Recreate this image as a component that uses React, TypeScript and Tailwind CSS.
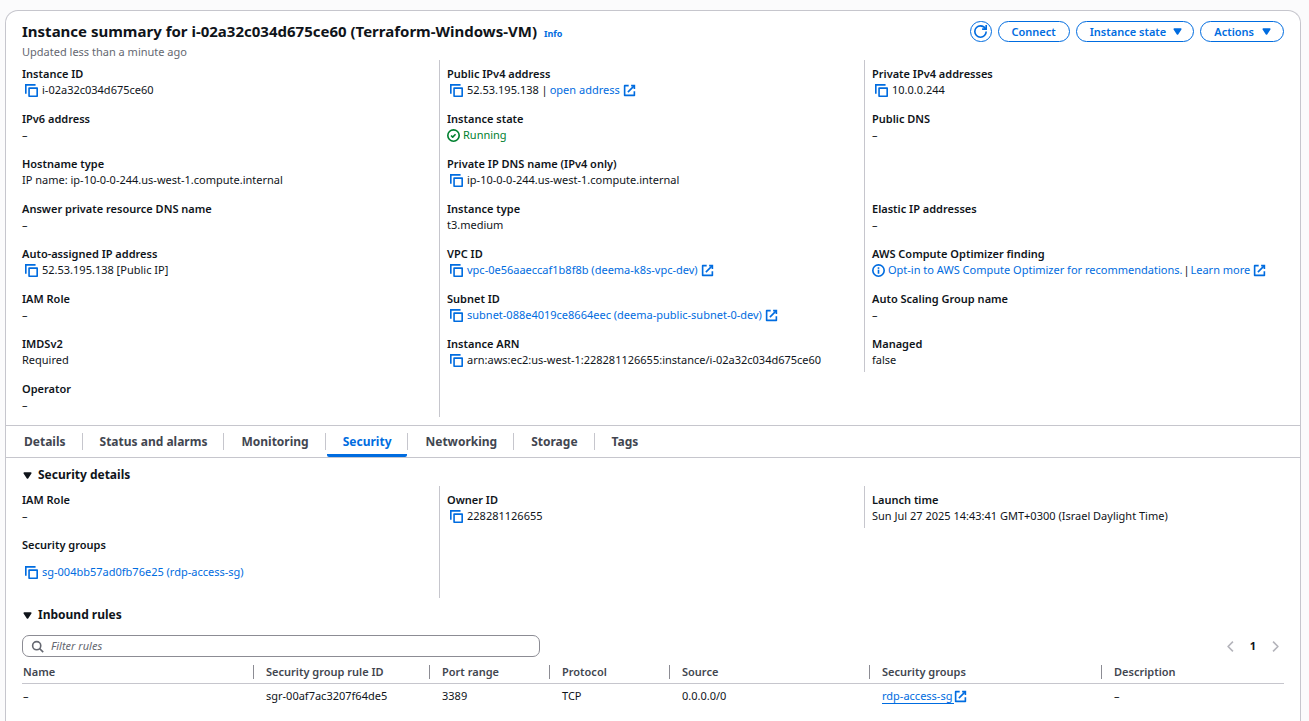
import React from "react";

type IconProps = { className?: string };

function Icon({ className = "", children }: IconProps & { children: React.ReactNode }) {
  return (
    <svg
      viewBox="0 0 16 16"
      fill="none"
      stroke="currentColor"
      strokeWidth="2"
      strokeLinejoin="round"
      aria-hidden="true"
      className={`size-[13px] shrink-0 ${className}`}
    >
      {children}
    </svg>
  );
}

const CopyIcon = () => (
  <Icon>
    <path d="M15 5H5v10h10V5Z" />
    <path d="M13 1H1v11" strokeLinejoin="miter" />
  </Icon>
);

const ExternalIcon = () => (
  <Icon>
    <path d="M10 2h4v4" strokeLinejoin="miter" />
    <path d="m6 10 8-8" />
    <path d="M14 9.048V14H2V2h5" />
  </Icon>
);

const RunningIcon = () => (
  <Icon>
    <circle cx="8" cy="8" r="7" />
    <path d="m5 8 2 2 3.521-3.521" />
  </Icon>
);

const InfoIcon = () => (
  <Icon>
    <circle cx="8" cy="8" r="7" />
    <path d="M8 12V7" />
    <path d="M8 4v2" />
  </Icon>
);

const CaretIcon = ({ className = "" }: IconProps) => (
  <Icon className={className}>
    <path d="M4 5h8l-4 6-4-6z" fill="currentColor" />
  </Icon>
);

const link = "text-[#006ce0]";

function Copyable({ children, name }: { children: React.ReactNode; name: string }) {
  return (
    <span className="flex items-center gap-1 pl-[3px]">
      <button type="button" aria-label={`Copy ${name}`} className={link}>
        <CopyIcon />
      </button>
      <span className="flex items-center gap-0.5">{children}</span>
    </span>
  );
}

function External({ children }: { children: React.ReactNode }) {
  return (
    <a href="#" className={`flex items-center gap-[3px] ${link}`}>
      {children}
      <ExternalIcon />
    </a>
  );
}

type Field = { label: string; value?: React.ReactNode; blank?: boolean };

function Item({ label, value }: Field) {
  return (
    <div className="pb-[13px] last:pb-1">
      <dt className="font-semibold">{label}</dt>
      <dd>{value ?? "–"}</dd>
    </div>
  );
}

function Columns({ columns }: { columns: Field[][] }) {
  return (
    <div className="grid grid-cols-3 pl-2 pr-[11px]">
      {columns.map((fields, i) => (
        <dl
          key={i}
          className={`border-l pl-[7px] pt-[6px] ${i === 0 ? "border-transparent" : "border-[#c6c6cd]"} ${
            i === 2 ? "self-start" : ""
          }`}
        >
          {fields.map((f, j) => (f.blank ? <div key={j} className="h-[45px]" /> : <Item key={j} {...f} />))}
        </dl>
      ))}
    </div>
  );
}

const summary: Field[][] = [
  [
    { label: "Instance ID", value: <Copyable name="instance ID">i-02a32c034d675ce60</Copyable> },
    { label: "IPv6 address" },
    { label: "Hostname type", value: "IP name: ip-10-0-0-244.us-west-1.compute.internal" },
    { label: "Answer private resource DNS name" },
    {
      label: "Auto-assigned IP address",
      value: <Copyable name="auto-assigned IP address">52.53.195.138 [Public IP]</Copyable>,
    },
    { label: "IAM Role" },
    { label: "IMDSv2", value: "Required" },
    { label: "Operator" },
  ],
  [
    {
      label: "Public IPv4 address",
      value: (
        <Copyable name="public IPv4 address">
          <span>52.53.195.138 |</span>
          <External>open address</External>
        </Copyable>
      ),
    },
    {
      label: "Instance state",
      value: (
        <span className="flex items-center gap-[3px] text-[#00802f]">
          <RunningIcon />
          Running
        </span>
      ),
    },
    {
      label: "Private IP DNS name (IPv4 only)",
      value: <Copyable name="private IP DNS name">ip-10-0-0-244.us-west-1.compute.internal</Copyable>,
    },
    { label: "Instance type", value: "t3.medium" },
    {
      label: "VPC ID",
      value: (
        <Copyable name="VPC ID">
          <External>vpc-0e56aaeccaf1b8f8b (deema-k8s-vpc-dev)</External>
        </Copyable>
      ),
    },
    {
      label: "Subnet ID",
      value: (
        <Copyable name="subnet ID">
          <External>subnet-088e4019ce8664eec (deema-public-subnet-0-dev)</External>
        </Copyable>
      ),
    },
    {
      label: "Instance ARN",
      value: (
        <Copyable name="instance ARN">arn:aws:ec2:us-west-1:228281126655:instance/i-02a32c034d675ce60</Copyable>
      ),
    },
  ],
  [
    { label: "Private IPv4 addresses", value: <Copyable name="private IPv4 address">10.0.0.244</Copyable> },
    { label: "Public DNS" },
    { label: "", blank: true },
    { label: "Elastic IP addresses" },
    {
      label: "AWS Compute Optimizer finding",
      value: (
        <span className="flex items-center gap-[3px]">
          <span className={link}>
            <InfoIcon />
          </span>
          <span className="flex items-center">
            <a href="#" className={link}>
              Opt-in to AWS Compute Optimizer for recommendations.
            </a>
            <span className="px-px">|</span>
            <External>Learn more</External>
          </span>
        </span>
      ),
    },
    { label: "Auto Scaling Group name" },
    { label: "Managed", value: "false" },
  ],
];

const security: Field[][] = [
  [
    { label: "IAM Role" },
    {
      label: "Security groups",
      value: (
        <span className="block pb-[14px] pt-[11px]">
          <Copyable name="security group ID">
            <a href="#" className={link}>
              sg-004bb57ad0fb76e25 (rdp-access-sg)
            </a>
          </Copyable>
        </span>
      ),
    },
  ],
  [{ label: "Owner ID", value: <Copyable name="owner ID">228281126655</Copyable> }],
  [{ label: "Launch time", value: "Sun Jul 27 2025 14:43:41 GMT+0300 (Israel Daylight Time)" }],
];

const tabs = ["Details", "Status and alarms", "Monitoring", "Security", "Networking", "Storage", "Tags"];

function Tabs() {
  return (
    <div role="tablist" className="flex h-[33px] items-stretch border-y border-[#c6c6cd] pl-0.5 text-[12px] font-bold">
      {tabs.map((tab, i) => {
        const active = tab === "Security";
        return (
          <div key={tab} className="flex items-center">
            <button
              type="button"
              role="tab"
              aria-selected={active}
              className={`h-full border-b-[3px] px-4 pt-[3px] ${
                active ? "rounded-b-xs border-[#006ce0] text-[#006ce0]" : "border-transparent text-[#424650]"
              }`}
            >
              {tab}
            </button>
            {i < tabs.length - 1 && <span className="mr-px h-[17px] w-px bg-[#c6c6cd]" />}
          </div>
        );
      })}
    </div>
  );
}

function SectionHeading({ children }: { children: React.ReactNode }) {
  return (
    <h2 className="px-[15px] text-[12px] leading-4 font-bold">
      <button type="button" aria-expanded="true" className="flex items-center gap-1">
        <CaretIcon />
        {children}
      </button>
    </h2>
  );
}

const pill =
  "flex h-[21px] items-center rounded-full border border-[#006ce0] font-semibold text-[#006ce0]";

const headers = [
  { title: "Name", width: "w-[232px]" },
  { title: "Security group rule ID", width: "w-[176px]" },
  { title: "Port range", width: "w-[120px]" },
  { title: "Protocol", width: "w-[120px]" },
  { title: "Source", width: "w-[200px]" },
  { title: "Security groups", width: "w-[232px]" },
  { title: "Description", width: "" },
];

const rules = [
  { name: "–", id: "sgr-00af7ac3207f64de5", port: "3389", protocol: "TCP", source: "0.0.0.0/0", group: "rdp-access-sg", description: "–" },
];

function InboundRules() {
  return (
    <div className="px-4">
      <div className="flex items-center justify-between pt-3 pb-[5px]">
        <label className="flex h-[22px] w-[518px] items-center gap-[7px] rounded-[7px] border border-[#8c8c94] pl-2">
          <Icon className="text-[#656871]">
            <circle cx="7" cy="7" r="5" />
            <path d="m15 15-4.5-4.5" />
          </Icon>
          <input
            type="search"
            aria-label="Filter rules"
            placeholder="Filter rules"
            className="min-w-0 flex-1 bg-transparent outline-none placeholder:text-[#656871] placeholder:italic"
          />
        </label>
        <nav aria-label="Pages" className="flex items-center gap-[13px] pr-[2px] text-[#b4b4bb]">
          <button type="button" aria-label="Previous page">
            <Icon>
              <path d="m11 2-6 6 6 6" />
            </Icon>
          </button>
          <button type="button" aria-current="page" className="font-bold text-[#0f141a]">
            1
          </button>
          <button type="button" aria-label="Next page">
            <Icon>
              <path d="m5 2 6 6-6 6" />
            </Icon>
          </button>
        </nav>
      </div>
      <table className="w-full table-fixed text-left">
        <thead>
          <tr className="border-b border-[#c6c6cd] text-[#424650]">
            {headers.map((h, i) => (
              <th key={h.title} scope="col" className={`pt-[3px] pb-1 font-semibold ${h.width}`}>
                <div
                  className={`h-[14px] leading-[14px] ${i === 0 ? "pl-px" : "pl-3"} ${
                    i < headers.length - 1 ? "border-r border-[#8c8c94]" : ""
                  }`}
                >
                  {h.title}
                </div>
              </th>
            ))}
          </tr>
        </thead>
        <tbody>
          {rules.map((r) => (
            <tr key={r.id}>
              <td className="py-1 pl-px">{r.name}</td>
              <td className="py-1 pl-3">{r.id}</td>
              <td className="py-1 pl-3">{r.port}</td>
              <td className="py-1 pl-3">{r.protocol}</td>
              <td className="py-1 pl-3">{r.source}</td>
              <td className="py-1 pl-3">
                <a href="#" className={`flex items-center ${link}`}>
                  <span className="border-b border-[#006ce0] pr-[2px] leading-[15px]">{r.group}</span>
                  <ExternalIcon />
                </a>
              </td>
              <td className="py-1 pl-3">{r.description}</td>
            </tr>
          ))}
        </tbody>
      </table>
    </div>
  );
}

export default function App() {
  return (
    <div className="flex min-h-screen flex-col bg-[#fbfbfc] pt-[10px] pr-2 pl-[5px] font-['Noto_Sans',sans-serif] text-[11px] leading-4 text-[#0f141a]">
      <main className="flex-1 rounded-t-[13px] border border-b-0 border-[#c6c6cd] bg-white">
        <header className="flex items-start justify-between px-4 pt-[10px]">
          <div>
            <div className="flex items-baseline gap-[7px]">
              <h1 className="text-[15px] leading-5 font-bold">
                Instance summary for i-02a32c034d675ce60 (Terraform-Windows-VM)
              </h1>
              <a href="#" className={`text-[9px] font-bold ${link}`}>
                Info
              </a>
            </div>
            <p className="pt-0.5 text-[#656871]">Updated less than a minute ago</p>
          </div>
          <div className="flex items-center gap-[6px]">
            <button type="button" aria-label="Refresh" className={`w-[22px] justify-center ${pill}`}>
              <Icon>
                <path d="M15 8c0 3.87-3.13 7-7 7s-7-3.13-7-7 3.13-7 7-7c2.79 0 5.2 1.63 6.33 4" />
                <path d="M10 5h5V0" strokeLinejoin="miter" />
              </Icon>
            </button>
            <button type="button" className={`px-[13px] ${pill}`}>
              Connect
            </button>
            <button type="button" className={`gap-[5px] pr-[9px] pl-[13px] ${pill}`}>
              Instance state
              <CaretIcon />
            </button>
            <button type="button" className={`gap-[6px] pr-[10px] pl-[13px] ${pill}`}>
              Actions
              <CaretIcon />
            </button>
          </div>
        </header>
        <Columns columns={summary} />
        <div className="pt-2">
          <Tabs />
        </div>
        <section className="pt-[9px]">
          <SectionHeading>Security details</SectionHeading>
          <div className="pt-[3px]">
            <Columns columns={security} />
          </div>
        </section>
        <section className="pt-[9px]">
          <SectionHeading>Inbound rules</SectionHeading>
          <InboundRules />
        </section>
      </main>
    </div>
  );
}
